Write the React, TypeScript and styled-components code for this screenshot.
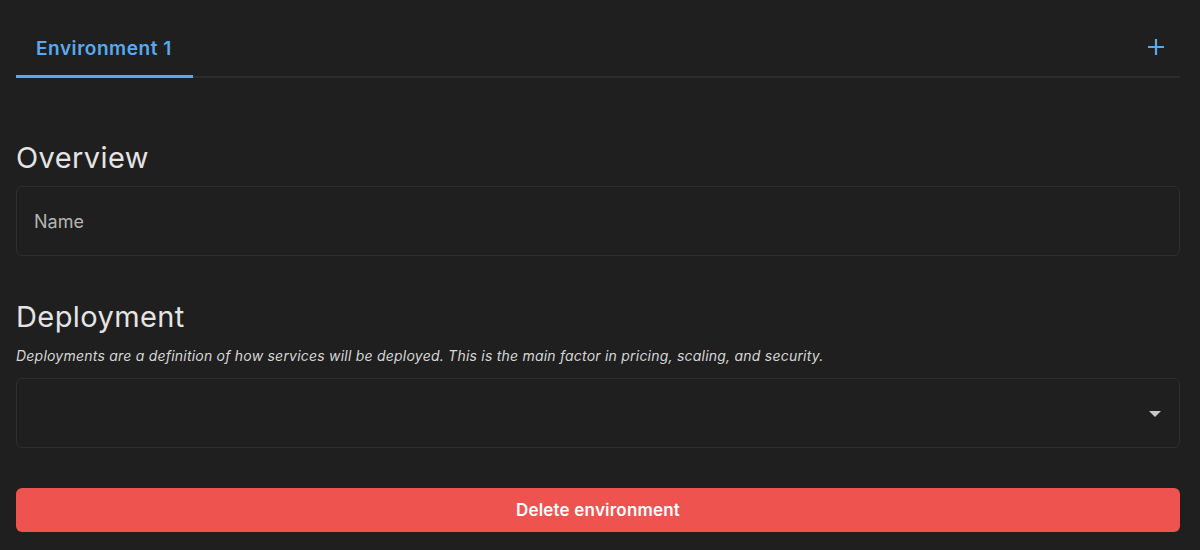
import React from "react";
import styled, { createGlobalStyle } from "styled-components";

const GlobalStyle = createGlobalStyle`
  html, body {
    margin: 0;
    padding: 0;
    background: #1f1f1f;
  }
  body {
    font-family: Inter, "Noto Sans", "Liberation Sans", sans-serif;
    color: #e6e6e6;
  }
`;

const Page = styled.div`
  padding: 0 20px 0 16px;
  display: flex;
  flex-direction: column;
`;

const TabBar = styled.div`
  display: flex;
  align-items: stretch;
  justify-content: space-between;
  height: 78px;
  border-bottom: 2px solid #2c2c2c;
  box-sizing: border-box;
`;

const Tab = styled.button<{ $active?: boolean }>`
  background: none;
  border: none;
  padding: 22px 20px 0;
  width: 177px;
  font-family: inherit;
  font-size: 19px;
  font-weight: 600;
  letter-spacing: 0.55px;
  color: ${(p) => (p.$active ? "#5aa9f0" : "#aaa")};
  border-bottom: 3px solid ${(p) => (p.$active ? "#5aa9f0" : "transparent")};
  margin-bottom: -2px;
  text-align: left;
  cursor: pointer;
`;

const AddButton = styled.button`
  background: none;
  border: none;
  width: 48px;
  padding: 18px 0 0;
  display: flex;
  align-items: center;
  justify-content: center;
  color: #5aa9f0;
  cursor: pointer;
`;

const Heading = styled.h2<{ $top: number }>`
  margin: ${(p) => p.$top}px 0 0;
  font-size: 29px;
  font-weight: 400;
  letter-spacing: 0.4px;
  line-height: 36px;
  color: #e4e4e4;
`;

const Description = styled.p`
  margin: 11px 0 0;
  font-size: 14px;
  font-style: italic;
  letter-spacing: 0.22px;
  line-height: 20px;
  color: #d6d6d6;
`;

const Field = styled.div<{ $top: number }>`
  margin-top: ${(p) => p.$top}px;
  height: 70px;
  border: 1px solid #2e2e2e;
  border-radius: 6px;
  box-sizing: border-box;
  display: flex;
  align-items: center;
  justify-content: space-between;
  padding: 0 18px 0 17px;
`;

const Placeholder = styled.span`
  font-size: 18px;
  color: #b4b4b4;
`;

const Caret = styled.span`
  width: 0;
  height: 0;
  border-left: 6px solid transparent;
  border-right: 6px solid transparent;
  border-top: 6px solid #c8c8c8;
  margin-top: 2px;
`;

const DangerButton = styled.button`
  margin-top: 40px;
  height: 44px;
  border: none;
  border-radius: 6px;
  background: #ef5350;
  color: #fff;
  font-family: inherit;
  font-size: 17px;
  font-weight: 600;
  letter-spacing: 0.2px;
  cursor: pointer;
`;

const PlusIcon = () => (
  <svg width="18" height="18" viewBox="0 0 18 18" fill="none">
    <path d="M9 1v16M1 9h16" stroke="currentColor" strokeWidth="2.2" />
  </svg>
);

export default function App() {
  return (
    <>
      <GlobalStyle />
      <Page>
        <TabBar>
          <Tab $active>Environment 1</Tab>
          <AddButton aria-label="Add environment">
            <PlusIcon />
          </AddButton>
        </TabBar>

        <Heading $top={62}>Overview</Heading>
        <Field $top={10}>
          <Placeholder>Name</Placeholder>
        </Field>

        <Heading $top={43}>Deployment</Heading>
        <Description>
          Deployments are a definition of how services will be deployed. This is the main factor in pricing,
          scaling, and security.
        </Description>
        <Field $top={12}>
          <span />
          <Caret />
        </Field>

        <DangerButton>Delete environment</DangerButton>
      </Page>
    </>
  );
}
